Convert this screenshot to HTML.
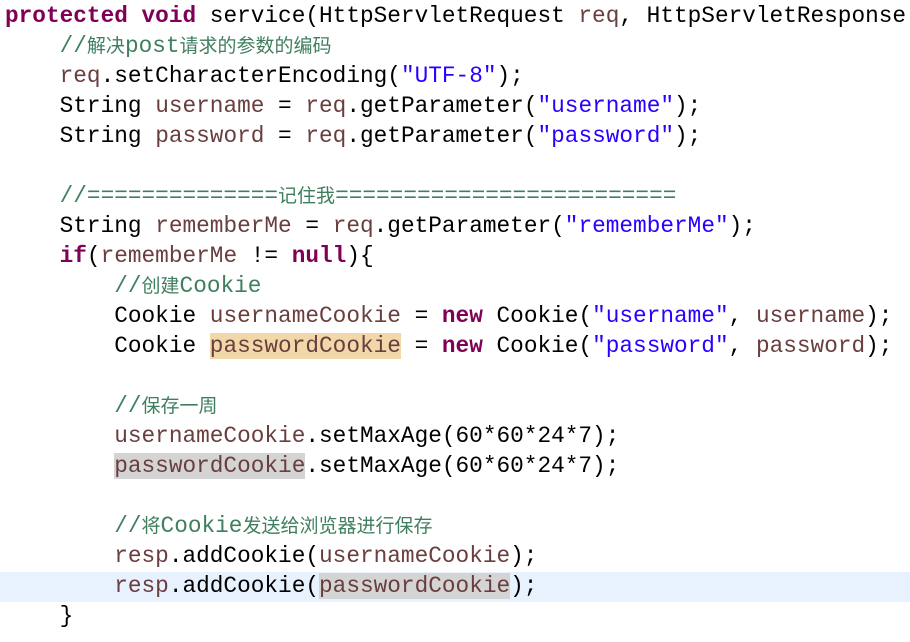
<!DOCTYPE html>
<html><head><meta charset="utf-8"><style>
body{margin:0;background:#fff;width:910px;height:642px;overflow:hidden}
pre{margin:0;padding:0 0 0 5px;font-family:"Liberation Mono","Noto Sans CJK SC",monospace;font-size:22.75px;line-height:30px;color:#000;position:relative;top:1px}
.k{color:#7f0055;font-weight:bold}
.v{color:#6a3e3e}
.s{color:#2a00ff}
.c{color:#3f7f5f}
.c i{font-style:normal;font-family:"Noto Sans CJK SC",sans-serif;font-size:19px;line-height:0}
.o{background:#f0d8a8}
.g{background:#d4d4d4}
.hl{position:absolute;left:0;top:572px;width:910px;height:30px;background:#e8f2fe}
</style></head><body>
<div class="hl"></div>
<pre><span class="k">protected</span> <span class="k">void</span> service(HttpServletRequest <span class="v">req</span>, HttpServletResponse
    <span class="c">//<i>解决</i>post<i>请求的参数的编码</i></span>
    <span class="v">req</span>.setCharacterEncoding(<span class="s">"UTF-8"</span>);
    String <span class="v">username</span> = <span class="v">req</span>.getParameter(<span class="s">"username"</span>);
    String <span class="v">password</span> = <span class="v">req</span>.getParameter(<span class="s">"password"</span>);

    <span class="c">//==============<i>记住我</i>=========================</span>
    String <span class="v">rememberMe</span> = <span class="v">req</span>.getParameter(<span class="s">"rememberMe"</span>);
    <span class="k">if</span>(<span class="v">rememberMe</span> != <span class="k">null</span>){
        <span class="c">//<i>创建</i>Cookie</span>
        Cookie <span class="v">usernameCookie</span> = <span class="k">new</span> Cookie(<span class="s">"username"</span>, <span class="v">username</span>);
        Cookie <span class="v o">passwordCookie</span> = <span class="k">new</span> Cookie(<span class="s">"password"</span>, <span class="v">password</span>);

        <span class="c">//<i>保存一周</i></span>
        <span class="v">usernameCookie</span>.setMaxAge(60*60*24*7);
        <span class="v g">passwordCookie</span>.setMaxAge(60*60*24*7);

        <span class="c">//<i>将</i>Cookie<i>发送给浏览器进行保存</i></span>
        <span class="v">resp</span>.addCookie(<span class="v">usernameCookie</span>);
        <span class="v">resp</span>.addCookie(<span class="v g">passwordCookie</span>);
    }
</pre>
</body></html>
